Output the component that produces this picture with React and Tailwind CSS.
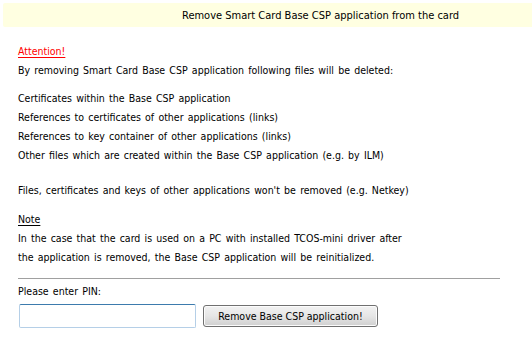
// Dialog: remove the Base CSP application from a smart card
const files = [
  'Certificates within the Base CSP application',
  'References to certificates of other applications (links)',
  'References to key container of other applications (links)',
  'Other files which are created within the Base CSP application (e.g. by ILM)',
];

export default function App() {
  return (
    <div
      className="w-[532px] h-[340px] bg-white text-black text-[10.5px] leading-[19px] [word-spacing:1.2px] overflow-hidden"
      style={{ fontFamily: "'DejaVu Sans Condensed', 'DejaVu Sans', sans-serif" }}
    >
      <div className="pt-[3px] pl-[3px]">
        <div className="h-[24px] bg-[#ffffe1] rounded-l-[2px] flex items-center pl-[179px] text-[11px] [word-spacing:0px]">
          Remove Smart Card Base CSP application from the card
        </div>
      </div>

      <div className="px-[18px] pt-[15px]">
        <p className="text-[#ff0000] underline underline-offset-2">Attention!</p>
        <p>By removing Smart Card Base CSP application following files will be deleted:</p>

        <ul className="mt-[9px]">
          {files.map((f) => (
            <li key={f}>{f}</li>
          ))}
        </ul>

        <p className="mt-[16px]">
          Files, certificates and keys of other applications won't be removed (e.g. Netkey)
        </p>

        <p className="mt-[10px] underline underline-offset-2">Note</p>
        <p>In the case that the card is used on a PC with installed TCOS-mini driver after</p>
        <p>the application is removed, the Base CSP application will be reinitialized.</p>

        <div className="mt-[11px] w-[482px] h-px bg-[#a0a0a0]" />

        <p className="mt-[3px]">Please enter PIN:</p>

        <div className="mt-[3px] flex items-center gap-[7px] ml-px">
          <input
            type="text"
            className="w-[177px] h-[24px] border border-[#b5cfe7] border-t-[#3d7bad] rounded-[2px] bg-white outline-none px-1"
          />
          <button className="w-[175px] h-[22px] border border-[#707070] rounded-[3px] bg-gradient-to-b from-[#f2f2f2] via-[#e6e6e6] to-[#d0d0d0] shadow-[inset_0_0_0_1px_#fcfcfc] text-[10.5px] leading-none">
            Remove Base CSP application!
          </button>
        </div>
      </div>
    </div>
  );
}
